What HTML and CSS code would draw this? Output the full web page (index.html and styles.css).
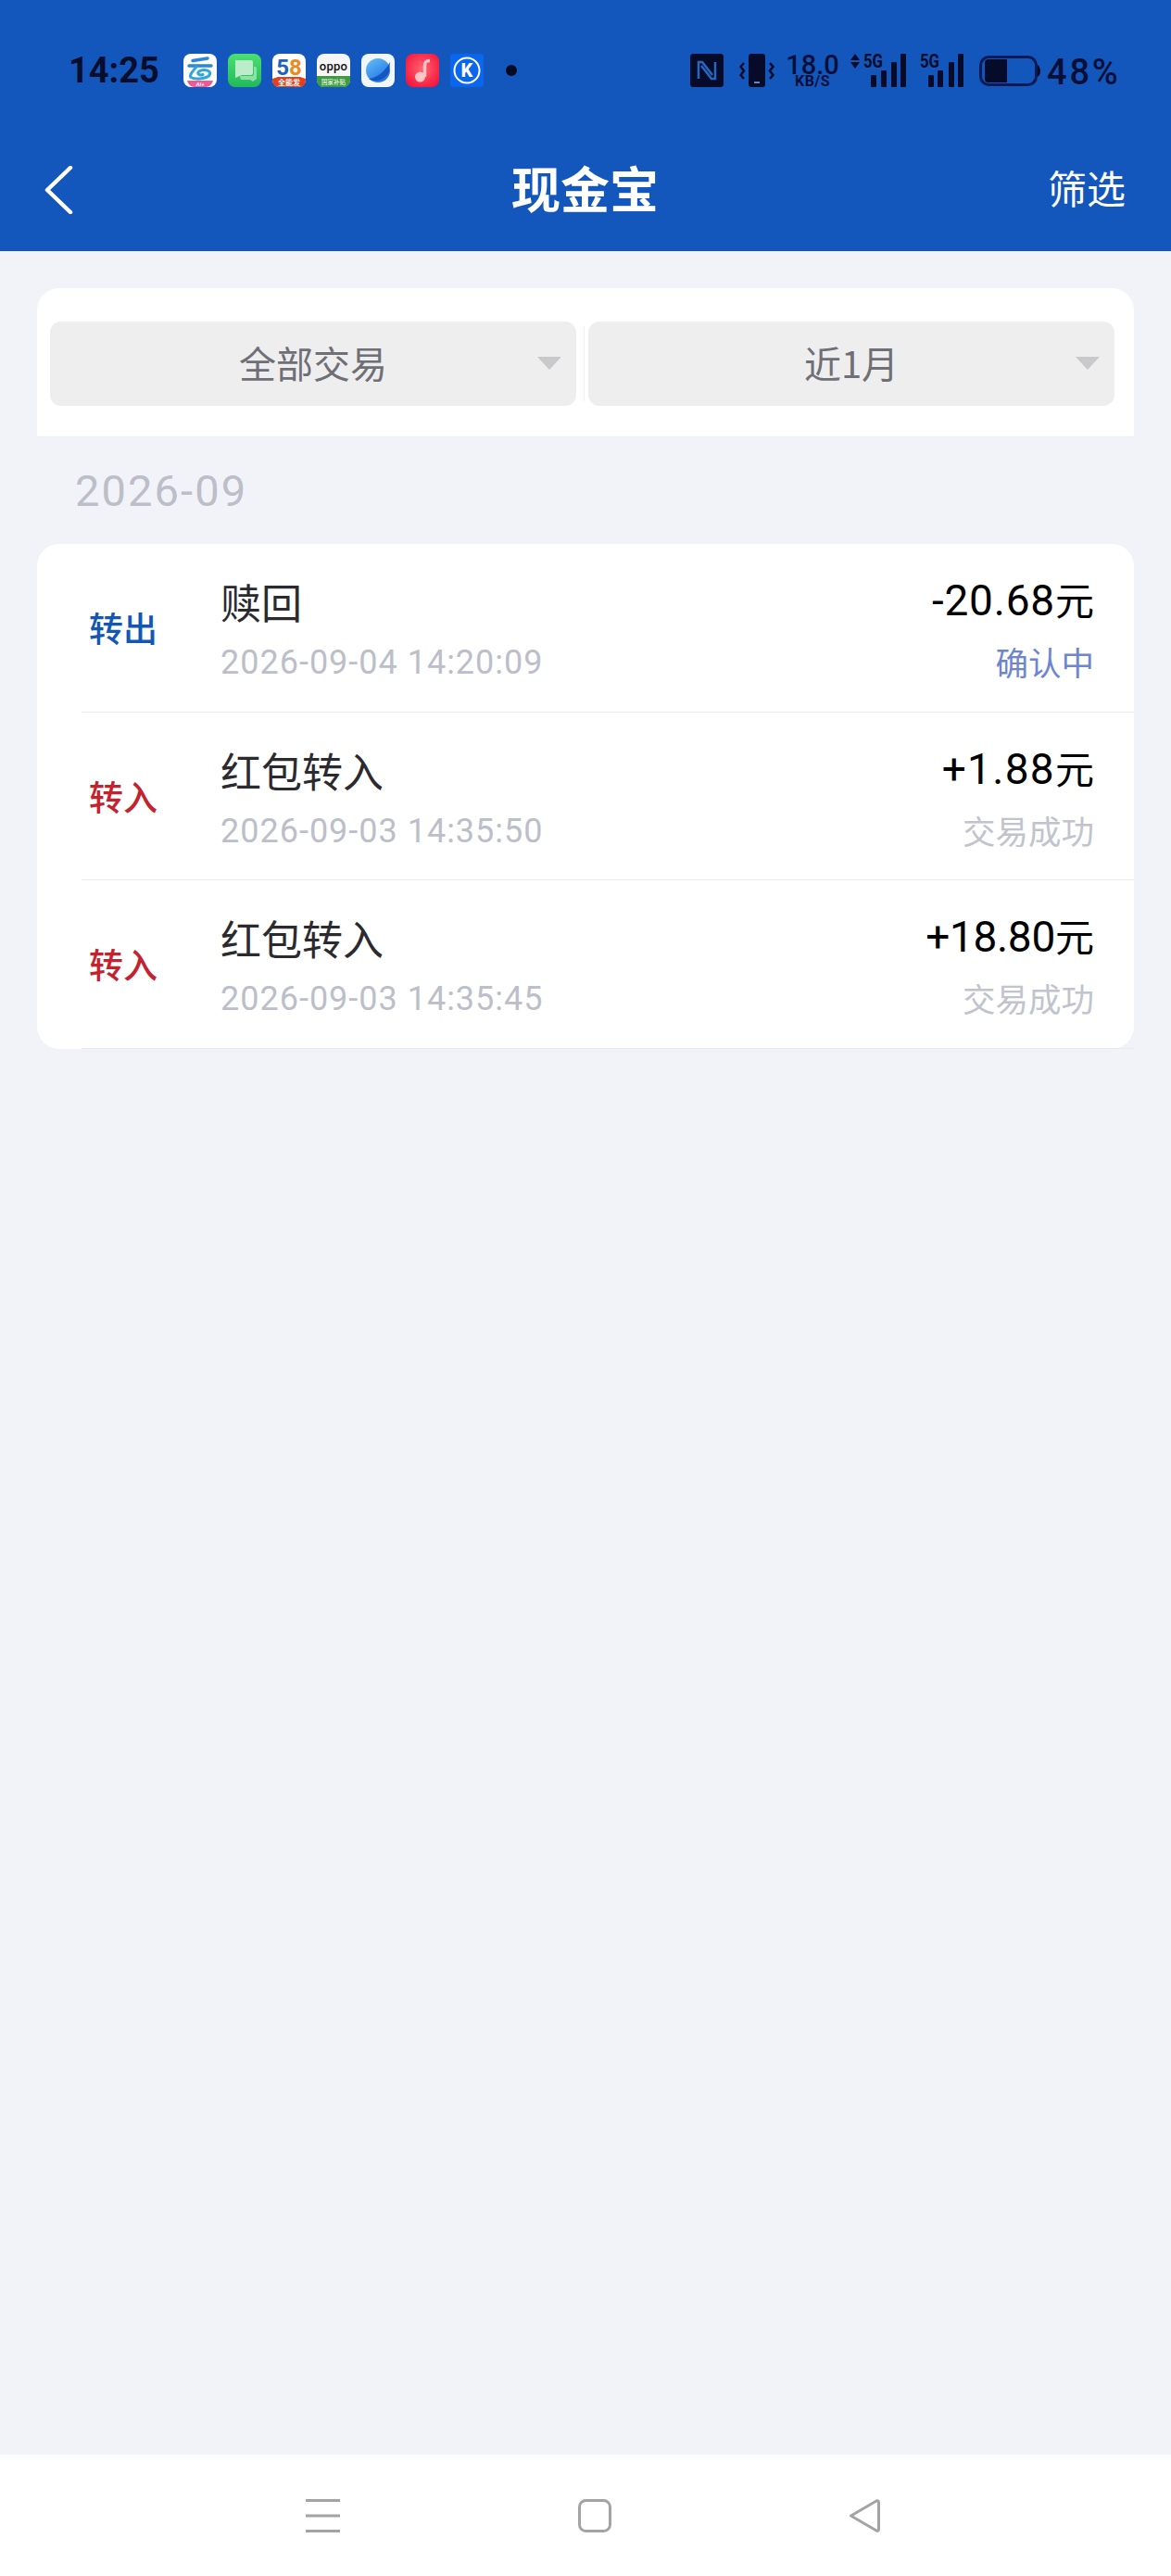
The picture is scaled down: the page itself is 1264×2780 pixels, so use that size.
FILE: index.html
```html
<!DOCTYPE html>
<html lang="zh-CN">
<head>
<meta charset="utf-8">
<title>现金宝</title>
<link rel="stylesheet" href="styles.css">
</head>
<body>
<div class="page">
  <header class="header">
    <div class="status">
      <div class="time">14:25</div>
      <div class="apps">
        <svg class="app" viewBox="0 0 36 36"><rect width="36" height="36" rx="8" fill="#fff"/><path d="M10 7.500 L26 5" class="yun-a"/><path d="M6 13 H30" class="yun-a"/><path d="M14 14 C10 19 6 23 8 25.500 C12 28 27 27.500 28.500 22 C29.500 17.500 21 16 17 19 C14 21 17 24 21 22.500" class="yun-b"/><path d="M4 29 H32 Q30 36 24 36 H12 Q6 36 4 29Z" fill="#ec5a97"/><text x="18" y="35" class="t-ai">AI+</text></svg>
        <svg class="app" viewBox="0 0 36 36"><defs><linearGradient id="g2" x1="0" y1="0" x2="0" y2="1"><stop offset="0" stop-color="#4be070"/><stop offset="1" stop-color="#22b95c"/></linearGradient></defs><rect width="36" height="36" rx="8" fill="url(#g2)"/><path d="M13 24 H26 Q28 24 28 22 V14 H30 Q31 14 31 16 V27 L27 30 L24 28 H14Z" fill="#8fdfa8"/><path d="M8 7 H25 Q27 7 27 9 V21 Q27 23 25 23 H15 L8 26Z" fill="#bdeccb"/></svg>
        <svg class="app" viewBox="0 0 36 36"><rect width="36" height="36" rx="8" fill="#fff"/><text x="18" y="23" class="t-58"><tspan fill="#1d63b8">5</tspan><tspan fill="#ec8a1e">8</tspan></text><path d="M0 27 L6 25 H30 L36 27 V28 Q36 36 28 36 H8 Q0 36 0 28Z" fill="#e3401f"/><text x="18" y="34" class="t-band">全能发</text></svg>
        <svg class="app" viewBox="0 0 36 36"><rect width="36" height="36" rx="8" fill="#f6f6f6"/><text x="18" y="18" class="t-oppo">oppo</text><path d="M0 24 H36 V28 Q36 36 28 36 H8 Q0 36 0 28Z" fill="#3f9a41"/><text x="18" y="33" class="t-sub">国家补贴</text></svg>
        <svg class="app" viewBox="0 0 36 36"><defs><linearGradient id="g5" x1="0.1" y1="0" x2="0.8" y2="1"><stop offset="0" stop-color="#63bdf8"/><stop offset="1" stop-color="#1c6fe2"/></linearGradient></defs><rect width="36" height="36" rx="8" fill="#f1f6fc"/><circle cx="18" cy="18" r="13" fill="url(#g5)"/><path d="M8 27 C17 26 25 20 31 9 L30 20 C26 28 16 32 8 27Z" fill="#1556c2"/></svg>
        <svg class="app" viewBox="0 0 36 36"><defs><radialGradient id="g6" cx="0.5" cy="0.45" r="0.65"><stop offset="0" stop-color="#ff6672"/><stop offset="1" stop-color="#f5113a"/></radialGradient></defs><rect width="36" height="36" rx="8" fill="url(#g6)"/><path d="M20.500 25 V13 C20.500 8.500 22 7.500 26 7.500" class="note"/><circle cx="15.500" cy="25" r="5.500" fill="#ffc4c6"/></svg>
        <svg class="app" viewBox="0 0 36 36"><rect width="36" height="36" rx="4" fill="#0b66ee"/><circle cx="18" cy="18" r="13.500" fill="none" stroke="#fff" stroke-width="2"/><text x="18" y="25" class="t-k">K</text></svg>
      </div>
      <div class="dot"></div>
      <div class="sys">
        <svg class="sys-nfc" viewBox="0 0 36 36"><rect width="36" height="36" rx="3.500" fill="#060b2a"/><path d="M9 27 V9 H13 L24 23" class="nfc-line"/><path d="M27 9 V27 H23 L12 13" class="nfc-line"/></svg>
        <svg class="sys-vib" viewBox="0 0 40 36"><rect x="12" width="18" height="36" rx="3" fill="#060b2a"/><rect x="18" y="30" width="6" height="2" fill="#5f86c9"/><path d="M7 10 L3.500 14 L7 18.500 L3.500 23 L7 27" class="squig"/><path d="M35 10 L38.500 14 L35 18.500 L38.500 23 L35 27" class="squig"/></svg>
        <div class="speed"><span class="speed-num">18.0</span><span class="speed-unit">KB/S</span></div>
        <svg class="sys-sig1" viewBox="0 0 60 36"><path d="M0 7 L5 0 L10 7Z M0 9 L5 16 L10 9Z" class="ink"/><text x="14" y="15" textLength="21" lengthAdjust="spacingAndGlyphs" class="t-5g">5G</text><rect x="22" y="23" width="6" height="13" rx="1" class="ink"/><rect x="33" y="18" width="6" height="18" rx="1" class="ink"/><rect x="44" y="9" width="6" height="27" rx="1" class="ink"/><rect x="54" width="6" height="36" rx="1" class="ink"/></svg>
        <svg class="sys-sig2" viewBox="0 0 47 36"><text x="0" y="15" textLength="21" lengthAdjust="spacingAndGlyphs" class="t-5g">5G</text><rect x="9" y="23" width="6" height="13" rx="1" class="ink"/><rect x="19" y="18" width="6" height="18" rx="1" class="ink"/><rect x="31" y="9" width="6" height="27" rx="1" class="ink"/><rect x="41" width="6" height="36" rx="1" class="ink"/></svg>
        <div class="batt">
          <svg class="batt-icon" viewBox="0 0 68 36"><rect x="3.500" y="3.500" width="60" height="30" rx="9" fill="none" stroke="#0a1a55" stroke-width="3"/><path d="M12 6 H32 V31 H12 Q8 31 8 27 V10 Q8 6 12 6Z" class="ink"/><path d="M65 12 Q68 14 68 18.500 Q68 23 65 25Z" class="ink"/></svg>
          <span class="batt-text">48%</span>
        </div>
      </div>
    </div>
    <div class="titlebar">
      <svg class="back" viewBox="0 0 32 52"><path d="M28 2 L3 26 L28 50" fill="none" stroke="#fff" stroke-width="4.500" stroke-linecap="round" stroke-linejoin="round"/></svg>
      <h1 class="title">现金宝</h1>
      <a class="filter-link">筛选</a>
    </div>
  </header>

  <main class="main">
    <section class="filters">
      <div class="select">全部交易</div>
      <div class="split"></div>
      <div class="select">近1月</div>
    </section>

    <div class="period">2026-09</div>

    <section class="list">
      <div class="row">
        <div class="tag tag-out">转出</div>
        <div class="info"><div class="name">赎回</div><div class="date">2026-09-04 14:20:09</div></div>
        <div class="money"><div class="amount">-20.68<span class="yuan">元</span></div><div class="state state-wait">确认中</div></div>
      </div>
      <div class="row">
        <div class="tag tag-in">转入</div>
        <div class="info"><div class="name">红包转入</div><div class="date">2026-09-03 14:35:50</div></div>
        <div class="money"><div class="amount amount-wide">+1.88<span class="yuan">元</span></div><div class="state">交易成功</div></div>
      </div>
      <div class="row">
        <div class="tag tag-in">转入</div>
        <div class="info"><div class="name">红包转入</div><div class="date">2026-09-03 14:35:45</div></div>
        <div class="money"><div class="amount amount-tight">+18.80<span class="yuan">元</span></div><div class="state">交易成功</div></div>
      </div>
    </section>
  </main>

  <nav class="softkeys">
    <svg class="key-menu" viewBox="0 0 37 36"><path d="M0 1.500 H37 M0 18 H37 M0 34.500 H37" fill="none" stroke="#a3a3a3" stroke-width="3"/></svg>
    <svg class="key-home" viewBox="0 0 36 36"><rect x="1.500" y="1.500" width="33" height="33" rx="7" fill="none" stroke="#a3a3a3" stroke-width="3"/></svg>
    <svg class="key-back" viewBox="0 0 34 36"><path d="M2.500 18 L30 2 Q32.500 1 32.500 4 V32 Q32.500 35 30 34 Z" fill="none" stroke="#a3a3a3" stroke-width="3" stroke-linejoin="round"/></svg>
  </nav>
</div>
</body>
</html>
```
FILE: styles.css
```css
* { box-sizing: border-box; }
html, body { margin: 0; padding: 0; }
body {
  font-family: "Noto Sans CJK SC", Roboto, sans-serif;
  background: #f1f3f8;
}
.page { display: flex; flex-direction: column; height: 2780px; }

/* header */
.header { background: #1357bc; height: 271px; flex: none; }
.status {
  height: 139px;
  padding: 58px 57px 0 74px;
  display: flex;
  align-items: flex-start;
}
.time {
  font: 700 38px/36px Roboto, sans-serif;
  color: #070d2c;
  width: 99px;
  white-space: nowrap;
}
.apps { display: flex; gap: 12px; margin-left: 25px; }
.app { width: 36px; height: 36px; display: block; }
.dot { width: 12px; height: 12px; border-radius: 50%; background: #050a24; margin: 12px 0 0 24px; }
.sys { display: flex; gap: 15px; margin-left: auto; }
.sys svg { display: block; height: 36px; overflow: visible; }
.sys-nfc { width: 36px; }
.sys-vib { width: 40px; }
.sys-sig1 { width: 60px; }
.sys-sig2 { width: 47px; }
.speed { width: 52px; display: flex; flex-direction: column; align-items: center; color: #070f38; font-family: Roboto, sans-serif; }
.speed-num { font-size: 29px; font-weight: 500; line-height: 24px; }
.speed-unit { font-size: 16px; font-weight: 700; line-height: 12px; letter-spacing: 0.4px; }
.batt { display: flex; gap: 7px; }
.batt-icon { width: 68px; }
.batt-text { font: 500 38px/41px Roboto, sans-serif; color: #070f38; width: 77px; white-space: nowrap; letter-spacing: 2.8px; }
.ink { fill: #060b2a; }
.t-5g { font: 700 20px Roboto, sans-serif; fill: #060b2a; }
.nfc-line { fill: none; stroke: #2a66bf; stroke-width: 2.5; }
.squig { fill: none; stroke: #060b2a; stroke-width: 2.5; }

.yun-a { fill: none; stroke: #2a86d8; stroke-width: 3.5; stroke-linecap: round; }
.yun-b { fill: none; stroke: #2fa6dc; stroke-width: 3; stroke-linecap: round; }
.t-ai { font: italic 700 6px Roboto, sans-serif; fill: #fff; text-anchor: middle; }
.t-58 { font: 700 24px Roboto, sans-serif; text-anchor: middle; }
.t-band { font: 700 8px "Noto Sans CJK SC", sans-serif; fill: #fff; text-anchor: middle; }
.t-oppo { font: 500 13px Roboto, sans-serif; fill: #111; text-anchor: middle; letter-spacing: 0.3px; }
.t-sub { font: 500 6.500px "Noto Sans CJK SC", sans-serif; fill: #e8f6e8; text-anchor: middle; }
.t-k { font: 800 20px Roboto, sans-serif; fill: #fff; text-anchor: middle; }
.note { fill: none; stroke: #ffc4c6; stroke-width: 3.500; }

.titlebar {
  height: 132px;
  padding: 0 49px 0 48px;
  display: grid;
  grid-template-columns: 1fr auto 1fr;
  align-items: center;
}
.back { width: 32px; height: 52px; display: block; }
.title { margin: 0 0 6px; font-size: 53px; line-height: 60px; font-weight: 700; color: #fff; }
.filter-link { justify-self: end; margin-bottom: 6px; font-size: 42px; line-height: 50px; color: #fff; }

/* body */
.main { flex: 1; padding: 40px 40px 0; }
.filters {
  height: 161px;
  padding: 36px 21px 0 14px;
  background: #fff;
  border-radius: 24px 24px 0 0;
  border-bottom: 1px solid #eceef3;
  display: flex;
  align-items: flex-start;
}
.select {
  position: relative;
  width: 568px;
  height: 91px;
  background: #eeeeef;
  border-radius: 12px;
  font-size: 40px;
  line-height: 88px;
  color: #6f6f76;
  text-align: center;
}
.select::after {
  content: "";
  position: absolute;
  right: 16px;
  top: 38px;
  border-style: solid;
  border-width: 14px 13px 0;
  border-color: #c9c9cb transparent transparent;
}
.split { width: 1px; height: 81px; margin: 5px 4px 0 8px; background: #f0f0f1; }

.period {
  height: 115px;
  padding-left: 41px;
  font: 400 47px/115px Roboto, sans-serif;
  letter-spacing: 2.1px;
  color: #bcbec9;
}

.list {
  background: #fff;
  border-radius: 24px;
}
.row {
  height: 181.500px;
  margin-left: 48px;
  padding-right: 43px;
  border-bottom: 1px solid #e9eaec;
  display: flex;
}
.tag {
  width: 150px;
  padding-left: 8px;
  font-size: 37px;
  font-weight: 500;
  display: flex;
  align-items: center;
}
.tag-out { color: #1357b4; }
.tag-in { color: #c3232f; }
.info { flex: 1; padding-top: 37px; }
.name { font-size: 44px; line-height: 50px; color: #2b2b2f; }
.date {
  margin-top: 16px;
  font: 400 36px/50px Roboto, sans-serif;
  letter-spacing: 1px;
  color: #bcbec9;
}
.money { padding-top: 34px; text-align: right; }
.amount { font: 400 46px/50px Roboto, sans-serif; letter-spacing: 0.8px; color: #000; }
.amount-wide { letter-spacing: 1.3px; }
.amount-tight { letter-spacing: -0.3px; }
.yuan { font-family: "Noto Sans CJK SC", sans-serif; font-size: 42px; letter-spacing: 0; }
.state { margin-top: 16px; font-size: 35.500px; line-height: 50px; color: #c1c3cd; }
.state-wait { color: #6f85cd; }

/* soft keys */
.softkeys {
  flex: none;
  height: 131px;
  background: #fff;
  border-top: 5px solid #fcfcfd;
  padding: 43px 0 0 330px;
  display: flex;
  align-items: flex-start;
  gap: 256.500px;
}
.softkeys svg { display: block; height: 36px; }
.key-menu { width: 37px; }
.key-home { width: 36px; }
.key-back { width: 34px; }
```
